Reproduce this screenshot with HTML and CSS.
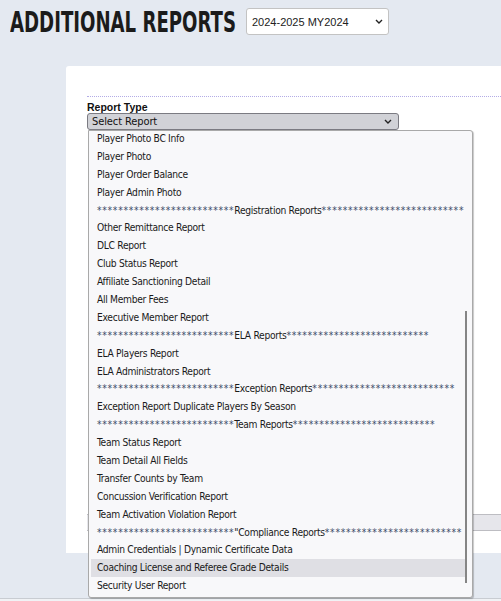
FILE: index.html
```html
<!DOCTYPE html>
<html lang="en">
<head>
<meta charset="utf-8">
<title>Additional Reports</title>
<link rel="stylesheet" href="styles.css">
</head>
<body>
<div class="page">
  <header class="top">
    <div class="title-box"><h1 class="title">ADDITIONAL REPORTS</h1></div>
    <div class="season-select">
      <span>2024-2025 MY2024</span>
      <svg class="chev" width="8" height="5" viewBox="0 0 8 5"><path d="M1 1 L4 4 L7 1" fill="none" stroke="#222" stroke-width="1.4"/></svg>
    </div>
  </header>
  <main class="panel">
    <div class="rule"></div>
    <div class="field-label">Report Type</div>
    <div class="select-wrap">
      <div class="report-select">
        <span>Select Report</span>
        <svg class="chev" width="8" height="5" viewBox="0 0 8 5"><path d="M1 1 L4 4 L7 1" fill="none" stroke="#222" stroke-width="1.4"/></svg>
      </div>
      <div class="dropdown">
        <ul class="options">
          <li>Player Photo BC Info</li>
          <li>Player Photo</li>
          <li>Player Order Balance</li>
          <li>Player Admin Photo</li>
          <li><span class="stars">**************************</span>Registration Reports<span class="stars">***************************</span></li>
          <li>Other Remittance Report</li>
          <li>DLC Report</li>
          <li>Club Status Report</li>
          <li>Affiliate Sanctioning Detail</li>
          <li>All Member Fees</li>
          <li>Executive Member Report</li>
          <li><span class="stars">**************************</span>ELA Reports<span class="stars">***************************</span></li>
          <li>ELA Players Report</li>
          <li>ELA Administrators Report</li>
          <li><span class="stars">**************************</span>Exception Reports<span class="stars">***************************</span></li>
          <li>Exception Report Duplicate Players By Season</li>
          <li><span class="stars">**************************</span>Team Reports<span class="stars">***************************</span></li>
          <li>Team Status Report</li>
          <li>Team Detail All Fields</li>
          <li>Transfer Counts by Team</li>
          <li>Concussion Verification Report</li>
          <li>Team Activation Violation Report</li>
          <li><span class="stars">**************************</span>"Compliance Reports<span class="stars">**************************</span></li>
          <li>Admin Credentials | Dynamic Certificate Data</li>
          <li class="active">Coaching License and Referee Grade Details</li>
          <li>Security User Report</li>
        </ul>
        <div class="scroll-thumb"></div>
      </div>
    </div>
    <div class="filler-bar"></div>
  </main>
  <footer class="bottom-strip"></footer>
</div>
</body>
</html>
```
FILE: styles.css
```css
html, body {
  margin: 0;
  padding: 0;
}
body {
  background: #e4e9f1;
  font-family: "Liberation Sans", Arial, sans-serif;
  color: #1e1e1e;
  overflow: hidden;
}
.page {
  width: 501px;
  height: 601px;
  display: flex;
  flex-direction: column;
}
.top {
  height: 66px;
  box-sizing: border-box;
  padding: 8px 0 0 10px;
  display: flex;
  align-items: flex-start;
}
.title-box {
  width: 222px;
  margin-right: 14px;
  overflow: visible;
}
.title {
  margin: 0;
  font-family: "DejaVu Sans Condensed", "DejaVu Sans", sans-serif;
  font-weight: bold;
  font-size: 29px;
  line-height: 29px;
  color: #1b1b1b;
  white-space: nowrap;
  display: inline-block;
  transform: scaleX(0.695);
  transform-origin: left top;
}
.season-select {
  width: 143px;
  height: 27px;
  box-sizing: border-box;
  border: 1px solid #c3c3c3;
  border-radius: 3px;
  background: #fff;
  display: flex;
  align-items: center;
  justify-content: space-between;
  padding: 0 5px 0 5px;
  font-size: 11px;
  color: #222;
}
.panel {
  margin-left: 66px;
  height: 487px;
  box-sizing: border-box;
  background: #fff;
  border-top-left-radius: 3px;
  padding: 30px 0 0 21px;
  display: flex;
  flex-direction: column;
}
.rule {
  border-top: 1px dotted #b3ace6;
}
.field-label {
  margin-top: 4px;
  font-weight: bold;
  font-size: 10.5px;
  line-height: 12px;
  color: #111;
}
.select-wrap {
  position: relative;
  width: 312px;
}
.report-select {
  height: 17px;
  box-sizing: border-box;
  border: 1px solid #7b7b82;
  border-radius: 3px;
  background: #d1d2d7;
  display: flex;
  align-items: center;
  justify-content: space-between;
  padding: 0 6px 0 4px;
  font-family: "DejaVu Sans Condensed", "DejaVu Sans", sans-serif;
  font-size: 11px;
  letter-spacing: -0.1px;
  color: #111;
}
.dropdown {
  position: absolute;
  top: 17px;
  left: 1px;
  width: 385px;
  height: 468px;
  box-sizing: border-box;
  border: 1px solid #a9a9a9;
  border-radius: 0 3px 3px 3px;
  background: #f8f8fa;
  box-shadow: 1px 1px 1px rgba(0, 0, 0, 0.22);
  overflow: hidden;
  z-index: 2;
}
.options {
  list-style: none;
  margin: -1px 0 0 0;
  padding: 0;
  font-family: "DejaVu Sans Condensed", "DejaVu Sans", sans-serif;
  font-size: 10.2px;
  letter-spacing: -0.3px;
  color: #1a1a1a;
}
.options li {
  height: 17.9px;
  line-height: 17.9px;
  margin: 0 5px 0 2px;
  padding-left: 6px;
  white-space: nowrap;
  overflow: hidden;
}
.options li.active {
  background: #dfdfe4;
}
.stars {
  letter-spacing: 0.7px;
  color: #3a4a66;
}
.scroll-thumb {
  position: absolute;
  left: 376px;
  top: 180px;
  width: 2px;
  height: 272px;
  background: #858585;
}
.filler-bar {
  margin-top: 384px;
  height: 17px;
  box-sizing: border-box;
  background: #e6e6eb;
  border-top: 1px solid #bdbdc2;
  border-bottom: 1px solid #bdbdc2;
}
.bottom-strip {
  margin-top: 45px;
  height: 3px;
  box-sizing: border-box;
  border-top: 1px solid #c8ccd2;
  background: #f0f2f5;
}
```
